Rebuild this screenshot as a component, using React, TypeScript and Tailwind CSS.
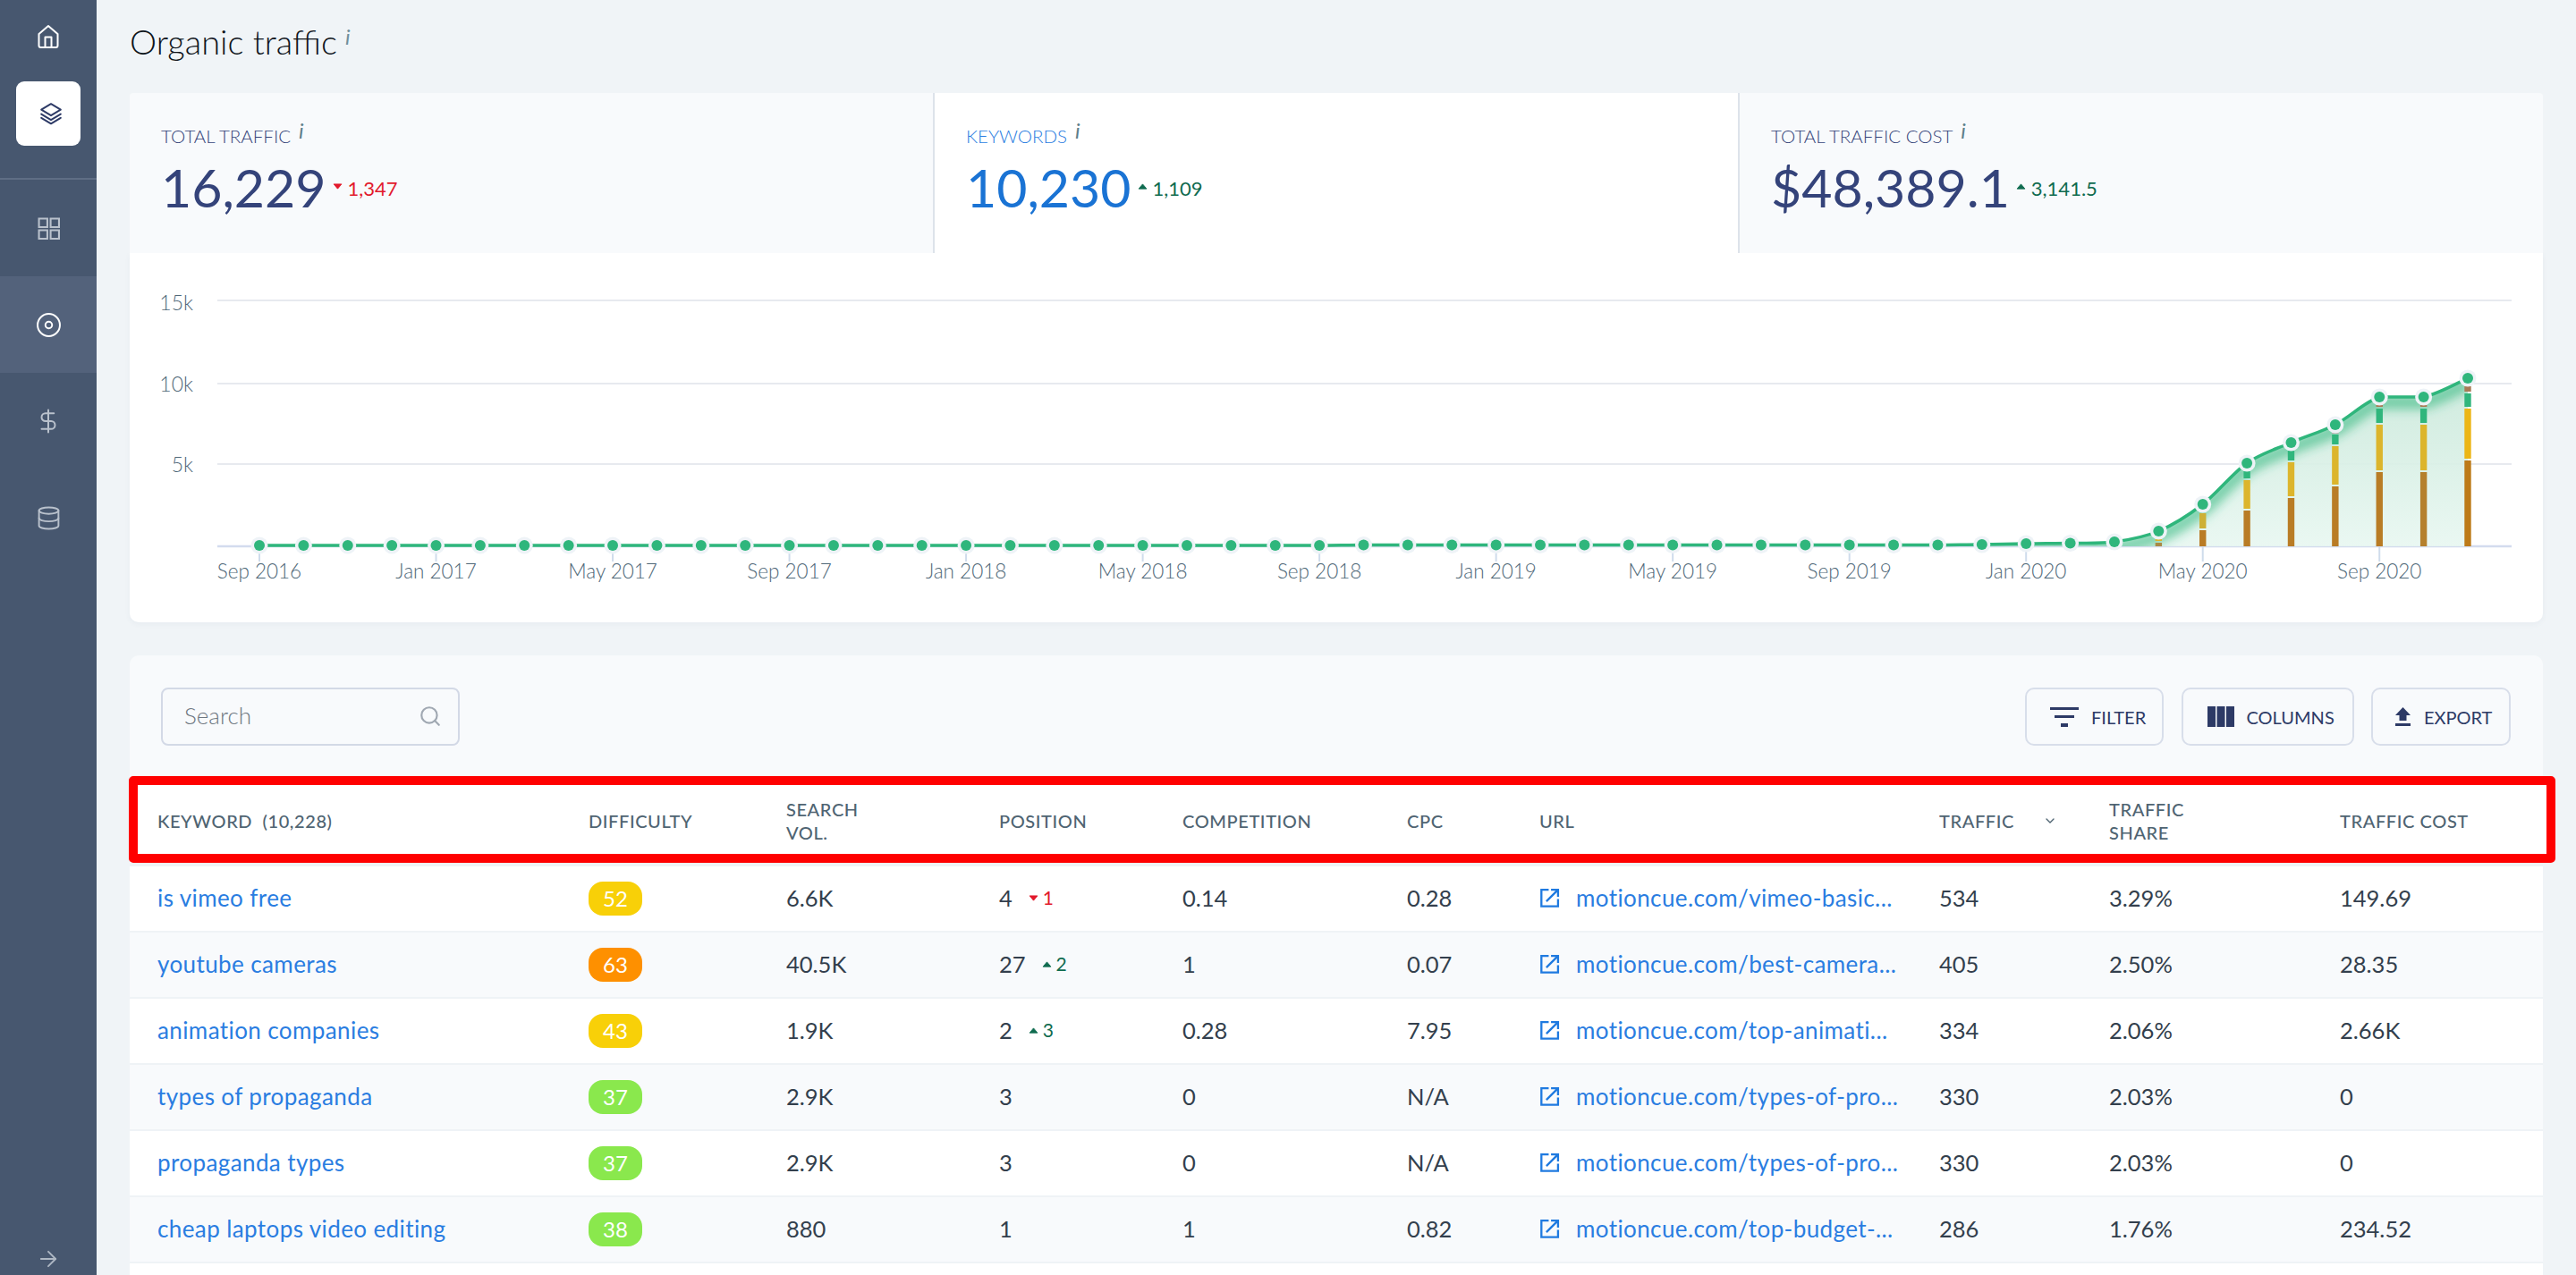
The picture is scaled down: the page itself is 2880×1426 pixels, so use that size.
import { DollarSign, Database, ArrowRight, Search, ChevronDown } from "lucide-react"

const months = ["Sep 2016", "Jan 2017", "May 2017", "Sep 2017", "Jan 2018", "May 2018", "Sep 2018", "Jan 2019", "May 2019", "Sep 2019", "Jan 2020", "May 2020", "Sep 2020"]

// chart is drawn in page coordinates, viewBox starts at the card's corner
const tail: Record<number, number> = { 39: 609, 40: 608, 41: 607.5, 42: 606, 43: 594, 44: 564, 45: 518, 46: 495, 47: 475, 48: 444, 49: 444, 50: 423 }
const points = Array.from({ length: 51 }, (_, i) => ({
  x: 290 + i * 49.38,
  y: tail[i] ?? (i < 25 ? 610 : 609.5),
}))

function linePath() {
  let d = `M${points[0].x} ${points[0].y}`
  for (let i = 0; i < points.length - 1; i++) {
    const p0 = points[Math.max(i - 1, 0)]
    const p1 = points[i]
    const p2 = points[i + 1]
    const p3 = points[Math.min(i + 2, points.length - 1)]
    const flat = Math.abs(p2.y - p1.y) < 1
    const c1x = p1.x + (p2.x - p0.x) / 6
    const c1y = flat ? p1.y : p1.y + (p2.y - p0.y) / 6
    const c2x = p2.x - (p3.x - p1.x) / 6
    const c2y = flat ? p2.y : p2.y - (p3.y - p1.y) / 6
    d += ` C${c1x} ${c1y} ${c2x} ${c2y} ${p2.x} ${p2.y}`
  }
  return d
}

const brown = "#b97c25"
const yellow = "#dcb52c"
const green = "#2fb67c"
const tan = "#a97a55"

const bars = [
  { i: 43, segs: [[607, 611, "#a98a45"], [603, 605, yellow]] },
  { i: 44, segs: [[593, 611, brown], [574, 591, "#cdb036"]] },
  { i: 45, segs: [[571, 611, brown], [537, 569, yellow], [527, 535, green]] },
  { i: 46, segs: [[557, 611, brown], [517, 555, yellow], [504, 515, green]] },
  { i: 47, segs: [[544, 611, brown], [499, 542, yellow], [486, 497, green], [483, 485, "#b9a9a9"]] },
  { i: 48, segs: [[528, 611, brown], [475, 526, yellow], [457, 473, green], [453, 455, tan]] },
  { i: 49, segs: [[528, 611, "#b5802d"], [475, 526, yellow], [457, 473, green], [453, 455, tan]] },
  { i: 50, segs: [[515, 611, "#bd7a18"], [457, 513, "#ecb616"], [440, 455, green], [432, 438, tan]] },
] as { i: number; segs: [number, number, string][] }[]

function TrafficChart() {
  const line = linePath()
  const area = `${line} L${points[50].x} 611 L${points[0].x} 611 Z`
  return (
    <svg viewBox="145 283 2698 413" className="block w-[2698px] h-[413px]">
      <defs>
        <linearGradient id="areaFill" x1="0" y1="423" x2="0" y2="611" gradientUnits="userSpaceOnUse">
          <stop offset="0" stopColor="#cbe9db" />
          <stop offset="1" stopColor="#e8f7f1" />
        </linearGradient>
        <clipPath id="areaClip">
          <path d={area} />
        </clipPath>
        <filter id="soft" x="-10%" y="-10%" width="120%" height="140%">
          <feGaussianBlur stdDeviation="6" />
        </filter>
      </defs>

      {[336, 429, 519].map((y) => (
        <line key={y} x1="243" x2="2808" y1={y} y2={y} stroke="#e7eaef" strokeWidth="2" />
      ))}
      <line x1="243" x2="2808" y1="611" y2="611" stroke="#d3dcee" strokeWidth="2.5" />

      {[["15k", 339], ["10k", 430], ["5k", 520]].map(([t, y]) => (
        <text key={t} x="216" y={Number(y) + 8} textAnchor="end" fontSize="23" fontWeight="300" fill="#4f6878" fontFamily="Lato, sans-serif">
          {t}
        </text>
      ))}

      {months.map((m, k) => {
        const x = points[k * 4].x
        return (
          <g key={m}>
            <line x1={x} x2={x} y1="612" y2="628" stroke="#cfdcec" strokeWidth="2" />
            <text x={x} y="647" textAnchor="middle" fontSize="22.5" fontWeight="300" fill="#4f6878" fontFamily="Lato, sans-serif">
              {m}
            </text>
          </g>
        )
      })}

      <path d={area} fill="url(#areaFill)" opacity="0.92" />
      <g clipPath="url(#areaClip)">
        <path d={line} fill="none" stroke="#2fb67c" strokeOpacity="0.6" strokeWidth="15" filter="url(#soft)" transform="translate(0 6)" />
      </g>

      {bars.map((b) =>
        b.segs.map(([top, bottom, color]) => (
          <rect key={`${b.i}-${top}`} x={points[b.i].x - 3.7} y={top} width="7.4" height={bottom - top} fill={color} />
        ))
      )}

      <path d={line} fill="none" stroke={green} strokeWidth="3.5" />
      {points.map((p, i) => (
        <g key={i}>
          <circle cx={p.x} cy={p.y} r="9.5" fill="#eef3f7" />
          <circle cx={p.x} cy={p.y} r="6" fill={green} />
        </g>
      ))}
    </svg>
  )
}

function Info({ className }: { className: string }) {
  return <span className={`italic ${className}`}>i</span>
}

function Triangle({ down, className }: { down?: boolean; className: string }) {
  return (
    <svg viewBox="0 0 12 8" className={`inline-block w-[11px] h-[7px] ${className}`} fill="currentColor">
      <path d={down ? "M1 1h10L6 7z" : "M1 7h10L6 1z"} stroke="currentColor" strokeLinejoin="round" />
    </svg>
  )
}

function Stat({ label, value, delta, down, active, last }: { label: string; value: string; delta: string; down?: boolean; active?: boolean; last?: boolean }) {
  return (
    <div
      className={`flex-1 h-[179px] pl-[35px] pt-[36px] ${active ? "bg-white" : "bg-[#f8fafc]"} ${last ? "" : "border-r-2 border-[#dde3ea]"}`}
    >
      <div className={`flex items-start h-[24px] text-[20.5px] leading-[24px] font-light ${active ? "text-[#2a7de1]" : "text-[#36457a]"}`}>
        {label}
        <Info className="ml-[9px] -mt-[6px] text-[24px] font-normal text-[#5d7e8a]" />
      </div>
      <div className="flex items-center mt-[16px] h-[60px]">
        <span className={`text-[59px] leading-[60px] ${active ? "text-[#1a73d4]" : "text-[#34437a]"}`}>{value}</span>
        <Triangle down={down} className={`ml-[7px] -mt-[3px] ${down ? "text-[#e2192c]" : "text-[#0f6b4f]"}`} />
        <span className={`ml-[6px] text-[22px] ${down ? "text-[#e2192c]" : "text-[#0f6b4f]"}`}>{delta}</span>
      </div>
    </div>
  )
}

const rows = [
  { kw: "is vimeo free", diff: 52, vol: "6.6K", pos: "4", change: "1", down: true, comp: "0.14", cpc: "0.28", url: "motioncue.com/vimeo-basic...", traffic: "534", share: "3.29%", cost: "149.69" },
  { kw: "youtube cameras", diff: 63, vol: "40.5K", pos: "27", change: "2", comp: "1", cpc: "0.07", url: "motioncue.com/best-camera...", traffic: "405", share: "2.50%", cost: "28.35" },
  { kw: "animation companies", diff: 43, vol: "1.9K", pos: "2", change: "3", comp: "0.28", cpc: "7.95", url: "motioncue.com/top-animati...", traffic: "334", share: "2.06%", cost: "2.66K" },
  { kw: "types of propaganda", diff: 37, vol: "2.9K", pos: "3", comp: "0", cpc: "N/A", url: "motioncue.com/types-of-pro...", traffic: "330", share: "2.03%", cost: "0" },
  { kw: "propaganda types", diff: 37, vol: "2.9K", pos: "3", comp: "0", cpc: "N/A", url: "motioncue.com/types-of-pro...", traffic: "330", share: "2.03%", cost: "0" },
  { kw: "cheap laptops video editing", diff: 38, vol: "880", pos: "1", comp: "1", cpc: "0.82", url: "motioncue.com/top-budget-...", traffic: "286", share: "1.76%", cost: "234.52" },
]

const gridCols = "grid grid-cols-[482px_221px_238px_205px_251px_148px_447px_190px_258px_1fr] pl-[31px] items-center"

function badgeColor(d: number) {
  if (d >= 60) return "bg-[#fe9000]"
  if (d >= 40) return "bg-[#f8d008]"
  return "bg-[#8ae84d]"
}

function NavItem({ children, active }: { children: React.ReactNode; active?: boolean }) {
  return (
    <div className={`h-[108px] flex items-center justify-center ${active ? "bg-[#53627b] text-white" : "text-[#b9c1cc]"}`}>{children}</div>
  )
}

function OutLink() {
  return (
    <svg viewBox="0 0 22 22" className="w-[23px] h-[23px] shrink-0 text-[#1f7ae0]" fill="none" stroke="currentColor" strokeWidth="2.2">
      <path d="M10 2H2.2v17.8H20V12" />
      <path d="M7.5 14.5 19 3M12.5 2H20v7.5" />
    </svg>
  )
}

export default function App() {
  return (
    <div className="flex w-[2880px] h-[1426px] overflow-hidden bg-[#f0f4f7] font-['Lato',sans-serif] text-[#333f4d]">
      {/* Sidebar */}
      <aside className="relative w-[108px] shrink-0 bg-[#47576f] flex flex-col">
        <div className="h-[82px] pt-[27px] flex justify-center text-white">
          <svg viewBox="0 0 26 28" className="w-[26px] h-[28px]" fill="none" stroke="currentColor" strokeWidth="2" strokeLinejoin="round">
            <path d="M13 2 2.5 11v13a2 2 0 0 0 2 2h17a2 2 0 0 0 2-2V11z" />
            <path d="M9.5 26V14.5h7V26" />
          </svg>
        </div>
        <div className="mx-[18px] mt-[9px] h-[72px] w-[72px] rounded-[9px] bg-white flex items-center justify-center text-[#2d3a66] pl-[5px]">
          <svg viewBox="0 0 24 24" className="w-[26px] h-[26px]" fill="none" stroke="currentColor" strokeWidth="1.8" strokeLinejoin="round" strokeLinecap="round">
            <path d="m12 2 10 6-10 6L2 8z" />
            <path d="m2 12.5 10 6 10-6" />
            <path d="m2 16.5 10 6 10-6" />
          </svg>
        </div>
        <div className="mt-[36px] h-[2px] bg-[#5f6e85]" />
        <NavItem>
          <svg viewBox="0 0 24 24" className="w-[25px] h-[25px]" fill="none" stroke="currentColor" strokeWidth="2">
            <path d="M1.5 1.5h9v9h-9zM14 1.5h9v9h-9zM1.5 14h9v9h-9zM14 14h9v9h-9z" />
          </svg>
        </NavItem>
        <NavItem active>
          <svg viewBox="0 0 26 26" className="w-[27px] h-[27px]" fill="none" stroke="currentColor" strokeWidth="1.9">
            <circle cx="13" cy="13" r="12" />
            <circle cx="13" cy="13" r="3.6" />
          </svg>
        </NavItem>
        <NavItem>
          <DollarSign size={30} strokeWidth={1.6} />
        </NavItem>
        <NavItem>
          <Database size={29} strokeWidth={1.6} />
        </NavItem>
        <div className="absolute left-[40px] bottom-[4px] text-[#aeb7c3]">
          <ArrowRight size={28} strokeWidth={1.6} />
        </div>
      </aside>

      {/* Main */}
      <main className="flex-1 px-[37px] min-w-0">
        <div className="h-[104px] pt-[26px]">
          <h1 className="flex items-start text-[38px] leading-[40px] font-light text-[#0f141b]">
            Organic traffic
            <Info className="ml-[9px] -mt-[5px] text-[24px] font-normal text-[#6f8f9b]" />
          </h1>
        </div>

        <div className="flex rounded-t-[4px] overflow-hidden">
          <Stat label="TOTAL TRAFFIC" value="16,229" delta="1,347" down />
          <Stat label="KEYWORDS" value="10,230" delta="1,109" active />
          <Stat label="TOTAL TRAFFIC COST" value="$48,389.1" delta="3,141.5" last />
        </div>

        <div className="bg-white rounded-b-[10px] h-[413px] shadow-[0_2px_6px_rgba(60,80,110,0.05)]">
          <TrafficChart />
        </div>

        {/* Keywords table */}
        <section className="mt-[37px] bg-[#f8fafc] rounded-t-[10px]">
          <div className="h-[135px] pl-[35px] pr-[36px] pt-[36px] flex justify-between items-start">
            <div className="w-[334px] h-[65px] rounded-[8px] border-2 border-[#d3d9e6] flex items-center justify-between pl-[24px] pr-[18px] pb-[2px] text-[26px] font-light text-[#6d7680]">
              Search
              <Search size={26} strokeWidth={2} className="text-[#a0a8b2]" />
            </div>
            <div className="flex gap-[19.5px] text-[20px] text-[#2d3a66]">
              <button className="w-[155px] h-[65px] rounded-[10px] border-2 border-[#d8deea] flex items-center pl-[26px] gap-[14px]">
                <svg viewBox="0 0 32 22" className="w-[32px] h-[22px]" fill="currentColor">
                  <path d="M0 0h32v3H0zM5 9h22v3H5zM12 18h8v4h-8z" />
                </svg>
                FILTER
              </button>
              <button className="w-[193px] h-[65px] rounded-[10px] border-2 border-[#d8deea] flex items-center pl-[27px] gap-[14px]">
                <svg viewBox="0 0 30 23" className="w-[30px] h-[23px]" fill="currentColor">
                  <path d="M0 0h9v23H0zM10.5 0h9v23h-9zM21 0h9v23h-9z" />
                </svg>
                COLUMNS
              </button>
              <button className="w-[156px] h-[65px] rounded-[10px] border-2 border-[#d8deea] flex items-center pl-[25px] gap-[15px]">
                <svg viewBox="0 0 17 21" className="w-[17px] h-[21px]" fill="currentColor">
                  <path d="M8.5 0 17 9h-4.5v6h-8V9H0zM0 18h17v3H0z" />
                </svg>
                EXPORT
              </button>
            </div>
          </div>

          {/* Header row, the red frame sits around it */}
          <div className={`relative h-[101px] pt-[2px] text-[20px] font-medium leading-[26px] tracking-[0.6px] text-[#4f6472] border-b-4 border-[#eff3f6] ${gridCols}`}>
            <div className="absolute left-[-1px] right-[-14px] top-0 bottom-0 rounded-[5px] border-[10px] border-[#ff0000] bg-white" />
            {["KEYWORD\u00a0\u00a0(10,228)", "DIFFICULTY", "SEARCH VOL.", "POSITION", "COMPETITION", "CPC", "URL", "TRAFFIC", "TRAFFIC SHARE", "TRAFFIC COST"].map((h) => (
              <div
                key={h}
                className={`relative flex items-center ${h === "SEARCH VOL." || h === "TRAFFIC SHARE" ? "w-[100px]" : ""}`}
              >
                {h}
                {h === "TRAFFIC" && <ChevronDown size={16} strokeWidth={2} className="ml-[32px]" />}
              </div>
            ))}
          </div>

          {rows.map((r, i) => (
            <div
              key={r.kw}
              className={`h-[74px] border-b-2 border-[#eff3f6] text-[25.5px] text-[#333f4d] ${i % 2 === 0 ? "bg-white" : "bg-[#f8fafc]"} ${gridCols}`}
            >
              <div className="text-[#2a7de1] text-[26px] tracking-[0.4px] pb-[2px]">{r.kw}</div>
              <div>
                <span className={`flex items-center justify-center w-[60px] h-[38px] rounded-[16px] text-[24px] text-white ${badgeColor(r.diff)}`}>{r.diff}</span>
              </div>
              <div className="pb-[2px]">{r.vol}</div>
              <div className="flex items-center pb-[2px]">
                {r.pos}
                {r.change && (
                  <span className={`flex items-center ml-[18px] text-[21px] ${r.down ? "text-[#e2192c]" : "text-[#0f6b4f]"}`}>
                    <Triangle down={r.down} className="mr-[5px]" />
                    {r.change}
                  </span>
                )}
              </div>
              <div className="pb-[2px]">{r.comp}</div>
              <div className="pb-[2px]">{r.cpc}</div>
              <div className="flex items-center gap-[18px] pb-[2px] text-[26px] tracking-[0.4px] text-[#2a7de1]">
                <OutLink />
                {r.url}
              </div>
              <div className="pb-[2px]">{r.traffic}</div>
              <div className="pb-[2px]">{r.share}</div>
              <div className="pb-[2px]">{r.cost}</div>
            </div>
          ))}
          <div className="h-[20px] bg-white" />
        </section>
      </main>
    </div>
  )
}
